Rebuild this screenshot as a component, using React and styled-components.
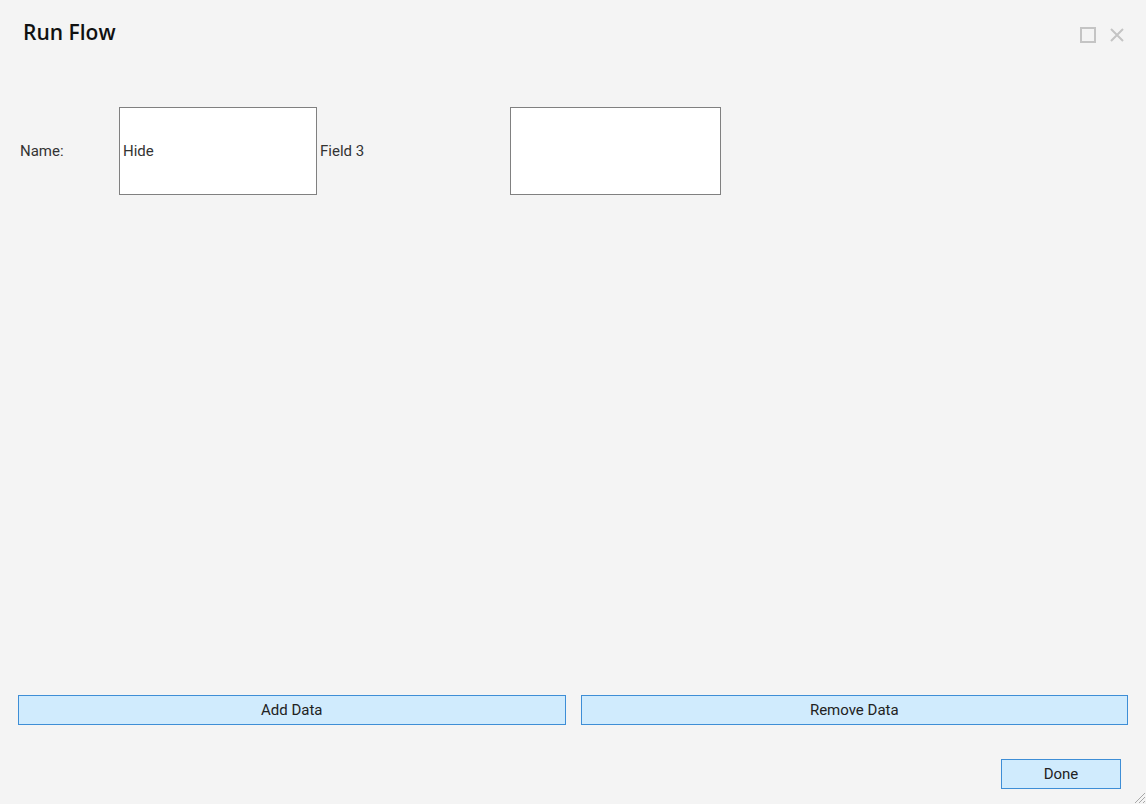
import React from 'react'
import styled, { createGlobalStyle } from 'styled-components'

const Global = createGlobalStyle`
  html, body { margin: 0; padding: 0; }
  body {
    background: #f4f4f4;
    font-family: Roboto, "Liberation Sans", sans-serif;
    color: #333;
  }
`

const Dialog = styled.div`
  position: relative;
  height: 804px;
  box-sizing: border-box;
  display: flex;
  flex-direction: column;
  background: #f4f4f4;
`

const Header = styled.div`
  display: flex;
  align-items: center;
  justify-content: space-between;
  height: 66px;
  padding: 0 21px 0 23px;
  box-sizing: border-box;
`

const Title = styled.h1`
  margin: 0;
  font-family: "Open Sans", Lato, sans-serif;
  font-weight: 600;
  font-size: 21px;
  color: #111;
  position: relative;
  top: -1px;
`

const WindowButtons = styled.div`
  display: flex;
  align-items: center;
  gap: 13px;
  position: relative;
  top: 2px;
`

const IconButton = styled.button`
  border: none;
  background: none;
  padding: 0;
  width: 16px;
  height: 16px;
  display: flex;
  align-items: center;
  justify-content: center;
  cursor: pointer;
`

const FormRow = styled.div`
  display: flex;
  align-items: center;
  margin-top: 41px;
  padding-left: 20px;
`

const Label = styled.span`
  width: ${p => p.width}px;
  font-size: 15px;
  color: #333;
  padding-left: ${p => p.indent || 0}px;
  box-sizing: border-box;
`

const Field = styled.div`
  width: ${p => p.width}px;
  height: 88px;
  box-sizing: border-box;
  border: 1px solid #808080;
  background: #fff;
  display: flex;
  align-items: center;
  padding-left: 3px;
  font-size: 15px;
  color: #333;
`

const Spacer = styled.div`
  flex: 1;
`

const ButtonRow = styled.div`
  display: grid;
  grid-template-columns: 1fr 1fr;
  gap: 15px;
  padding: 0 18px;
`

const ActionButton = styled.button`
  height: 30px;
  width: ${p => (p.width ? `${p.width}px` : 'auto')};
  border: 1px solid #3e8ed6;
  background: #d0ebfd;
  font-family: Roboto, "Liberation Sans", sans-serif;
  font-size: 15px;
  color: #222;
  padding: 0;
  cursor: pointer;
`

const Footer = styled.div`
  display: flex;
  justify-content: flex-end;
  padding: 34px 25px 15px 0;
`

const Grip = styled.svg`
  position: absolute;
  right: 0;
  bottom: 0;
`

export default function App() {
  return (
    <>
      <Global />
      <Dialog>
        <Header>
          <Title>Run Flow</Title>
          <WindowButtons>
            <IconButton aria-label="maximize">
              <svg width="16" height="16" viewBox="0 0 16 16">
                <rect x="1" y="1" width="14" height="14" fill="none" stroke="#c4c4c4" strokeWidth="2" />
              </svg>
            </IconButton>
            <IconButton aria-label="close">
              <svg width="16" height="16" viewBox="0 0 16 16">
                <path d="M2 2 L14 14 M14 2 L2 14" stroke="#c4c4c4" strokeWidth="2" />
              </svg>
            </IconButton>
          </WindowButtons>
        </Header>

        <FormRow>
          <Label width={99}>Name:</Label>
          <Field width={198}>Hide</Field>
          <Label width={193} indent={3}>Field 3</Label>
          <Field width={211} />
        </FormRow>

        <Spacer />

        <ButtonRow>
          <ActionButton>Add Data</ActionButton>
          <ActionButton>Remove Data</ActionButton>
        </ButtonRow>

        <Footer>
          <ActionButton width={120}>Done</ActionButton>
        </Footer>

        <Grip width="14" height="14" viewBox="0 0 14 14">
          <path d="M13 3 L3 13 M13 7 L7 13 M13 11 L11 13" stroke="#a8a8a8" strokeWidth="1" />
        </Grip>
      </Dialog>
    </>
  )
}
